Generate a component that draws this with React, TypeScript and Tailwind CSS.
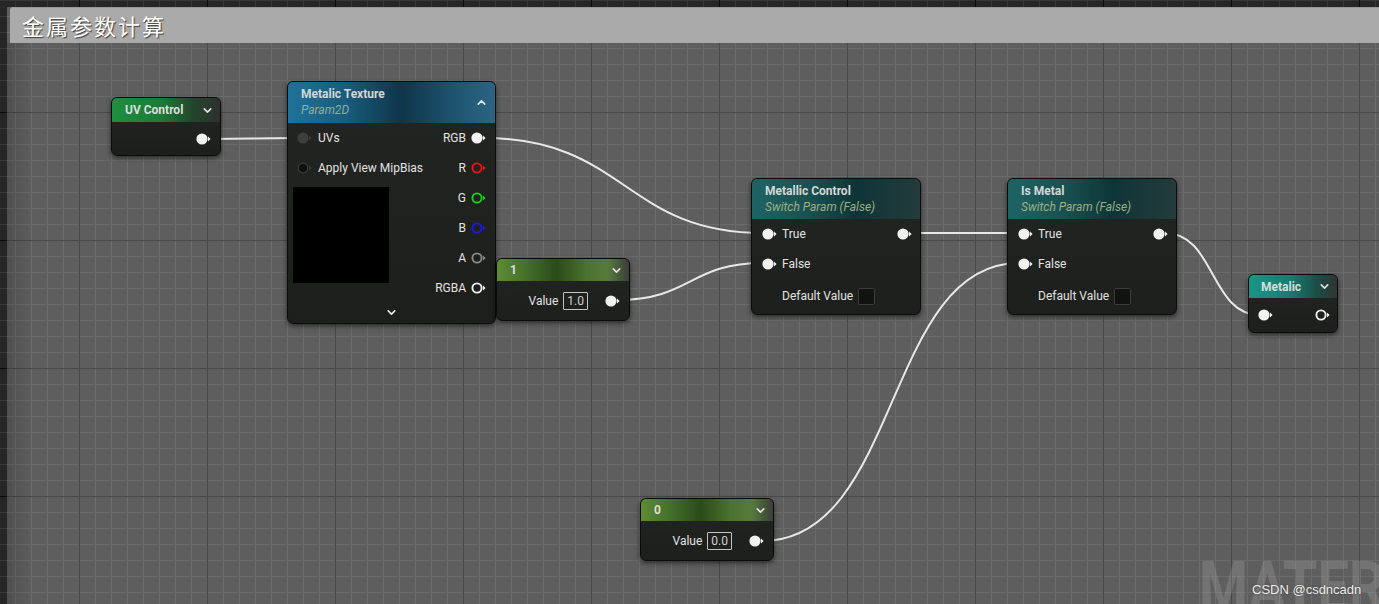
import React from 'react';
import { ChevronDown, ChevronUp } from 'lucide-react';

// --- Pin d'entrée / sortie (cercle + petite flèche) ---
type PinKind = 'filled' | 'outline' | 'dim' | 'dark';

const Pin = ({ kind = 'filled', color = '#f2f2f2' }: { kind?: PinKind; color?: string }) => {
    if (kind === 'outline') {
        return (
            <svg width="15" height="12" viewBox="0 0 15 12" className="shrink-0">
                <circle cx="6" cy="6" r="4.6" fill="none" stroke={color} strokeWidth="1.9" />
                <polygon points="12,3.6 14.6,6 12,8.4" fill={color} />
            </svg>
        );
    }
    if (kind === 'dim') {
        return (
            <svg width="15" height="12" viewBox="0 0 15 12" className="shrink-0">
                <circle cx="6" cy="6" r="5.5" fill="#3d3e3d" />
                <polygon points="12,3.6 14.6,6 12,8.4" fill="#3d3e3d" />
            </svg>
        );
    }
    if (kind === 'dark') {
        return (
            <svg width="15" height="12" viewBox="0 0 15 12" className="shrink-0">
                <circle cx="6" cy="6" r="4.8" fill="#0f0f0f" stroke="#3a3a3a" strokeWidth="1.2" />
                <polygon points="12,3.6 14.6,6 12,8.4" fill="#3a3a3a" />
            </svg>
        );
    }
    return (
        <svg width="15" height="12" viewBox="0 0 15 12" className="shrink-0">
            <circle cx="6" cy="6" r="5.6" fill={color} />
            <polygon points="12,3.6 14.6,6 12,8.4" fill={color} />
        </svg>
    );
};

const nodeBase =
    'absolute rounded-[6px] border border-[#0b0b0b] bg-[linear-gradient(180deg,#232523_0%,#1d1f1d_100%)] shadow-[0_2px_5px_rgba(0,0,0,0.55)] font-[family-name:Roboto,sans-serif] text-[12px] text-[#e2e2e2]';

// --- Noeud constante (1 / 0) ---
const ConstantNode = ({ pos, label, value }: { pos: string; label: string; value: string }) => (
    <div className={`${nodeBase} ${pos} w-[134px] h-[63px]`}>
        <div className="h-[22px] rounded-t-[5px] flex items-center justify-between pl-[13px] pr-[6px] bg-[linear-gradient(90deg,#5d8b34_0%,#44702a_22%,#2b4a19_45%,#4a7230_68%,#587a3e_84%,#3a3d38_100%)]">
            <span className="font-bold text-[#dcdcdc]">{label}</span>
            <ChevronDown size={13} strokeWidth={3} className="text-[#e0e0e0]" />
        </div>
        <div className="h-[39px] pt-[1px] flex items-center justify-end pr-[9px]">
            <span>Value</span>
            <span className="ml-[5px] h-[18px] px-[3px] border border-[#c4c4c4] rounded-[1px] text-[#cfcfcf] leading-[16px]">
                {value}
            </span>
            <span className="ml-[17px]">
                <Pin />
            </span>
        </div>
    </div>
);

// --- Noeud Switch Param ---
const SwitchNode = ({ pos, title }: { pos: string; title: string }) => (
    <div className={`${nodeBase} ${pos} w-[170px] h-[137px]`}>
        <div className="h-[40px] rounded-t-[5px] flex flex-col justify-center pl-[13px] bg-[linear-gradient(90deg,#1e6463_0%,#18504f_35%,#0e3536_62%,#233b3b_100%)]">
            <span className="font-bold text-[#d6d6d6] leading-[15px]">{title}</span>
            <span className="italic text-[#9fae86] leading-[16px]">Switch Param (False)</span>
        </div>
        <div className="h-[30px] flex items-center justify-between pl-[10px] pr-[8px]">
            <div className="flex items-center gap-[5px]">
                <Pin />
                <span>True</span>
            </div>
            <Pin />
        </div>
        <div className="h-[30px] flex items-center pl-[10px] gap-[5px]">
            <Pin />
            <span>False</span>
        </div>
        <div className="h-[34px] flex items-center pl-[30px] gap-[5px]">
            <span>Default Value</span>
            <span className="w-[17px] h-[17px] rounded-[2px] bg-[#121212] border border-[#3a3a3a]" />
        </div>
    </div>
);

const App = () => {
    return (
        <div className="relative w-[1379px] h-[604px] overflow-hidden bg-[#262626] bg-[linear-gradient(to_right,#0a0a0a_1px,transparent_1px),linear-gradient(to_bottom,#0a0a0a_1px,transparent_1px),linear-gradient(to_right,#373737_1px,transparent_1px),linear-gradient(to_bottom,#373737_1px,transparent_1px)] bg-[size:128px_128px,128px_128px,16px_16px,16px_16px] bg-[position:79px_112px,79px_112px,15px_0px,15px_0px]">
            {/* Boîte de commentaire */}
            <div className="absolute left-[7px] top-[7px] right-0 bottom-0 bg-white/[0.26] flex flex-col">
                <div className="h-[36px] ml-[3px] rounded-tl-[3px] bg-[#aaaaaa] border-t border-[#9a9a9a] flex items-center pl-[12px]">
                    <span className="text-[22px] tracking-[2px] text-white font-[family-name:'Noto_Sans_CJK_SC',sans-serif] [text-shadow:1px_1px_1px_rgba(0,0,0,0.65)]">
                        金属参数计算
                    </span>
                </div>
                <div className="flex-1 flex">
                    <div className="w-[26px] bg-[linear-gradient(90deg,rgba(0,0,0,0.16),transparent)]" />
                </div>
            </div>

            {/* Câbles */}
            <svg className="absolute inset-0 pointer-events-none" width="1379" height="604">
                <g fill="none" stroke="#e8e8e8" strokeWidth="2">
                    <path d="M209,139 C250,139 255,138 298,138" />
                    <path d="M483,138 C625,138 625,233 763,233" />
                    <path d="M618,300 C690,300 690,263 763,263" />
                    <path d="M910,233 L1019,233" />
                    <path d="M762,541 C900,541 885,263 1019,263" />
                    <path d="M1165,233 C1215,233 1210,315 1260,315" />
                </g>
            </svg>

            {/* UV Control */}
            <div className={`${nodeBase} left-[111px] top-[97px] w-[110px] h-[59px]`}>
                <div className="h-[24px] rounded-t-[5px] flex items-center justify-between pl-[13px] pr-[6px] bg-[linear-gradient(90deg,#1e8e3e_0%,#1b7c37_45%,#24452c_75%,#2e312e_100%)]">
                    <span className="font-bold text-[#dcdcdc]">UV Control</span>
                    <ChevronDown size={13} strokeWidth={3} className="text-[#e0e0e0]" />
                </div>
                <div className="h-[33px] pt-[1px] flex items-center justify-end pr-[9px]">
                    <Pin />
                </div>
            </div>

            {/* Metalic Texture */}
            <div className={`${nodeBase} left-[287px] top-[81px] w-[209px] h-[243px]`}>
                <div className="h-[41px] rounded-t-[5px] flex items-center justify-between pl-[13px] pr-[7px] bg-[linear-gradient(90deg,#1f7299_0%,#185c7d_28%,#0f3549_55%,#1e5470_80%,#2b6583_100%)]">
                    <div className="flex flex-col">
                        <span className="font-bold text-[#d6d6d6] leading-[15px]">Metalic Texture</span>
                        <span className="italic text-[#8fae9f] leading-[17px]">Param2D</span>
                    </div>
                    <ChevronUp size={13} strokeWidth={3} className="text-[#e6e6e6]" />
                </div>
                <div className="flex justify-between">
                    <div className="flex flex-col pl-[9px]">
                        <div className="h-[30px] flex items-center gap-[6px]">
                            <Pin kind="dim" />
                            <span>UVs</span>
                        </div>
                        <div className="h-[30px] flex items-center gap-[6px]">
                            <Pin kind="dark" />
                            <span>Apply View MipBias</span>
                        </div>
                        <div className="mt-[4px] -ml-[4px] w-[96px] h-[96px] bg-black" />
                    </div>
                    <div className="flex flex-col items-end pr-[9px]">
                        {[
                            { l: 'RGB', k: 'filled' as PinKind, c: '#f4f4f4' },
                            { l: 'R', k: 'outline' as PinKind, c: '#e81515' },
                            { l: 'G', k: 'outline' as PinKind, c: '#17d617' },
                            { l: 'B', k: 'outline' as PinKind, c: '#1a1ae0' },
                            { l: 'A', k: 'outline' as PinKind, c: '#8a8a8a' },
                            { l: 'RGBA', k: 'outline' as PinKind, c: '#f0f0f0' },
                        ].map((p) => (
                            <div key={p.l} className="h-[30px] flex items-center gap-[5px]">
                                <span>{p.l}</span>
                                <Pin kind={p.k} color={p.c} />
                            </div>
                        ))}
                    </div>
                </div>
                <div className="h-[19px] flex items-center justify-center">
                    <ChevronDown size={13} strokeWidth={3} className="text-[#e6e6e6]" />
                </div>
            </div>

            <ConstantNode pos="left-[496px] top-[258px]" label="1" value="1.0" />
            <ConstantNode pos="left-[640px] top-[498px]" label="0" value="0.0" />

            <SwitchNode pos="left-[751px] top-[178px]" title="Metallic Control" />
            <SwitchNode pos="left-[1007px] top-[178px]" title="Is Metal" />

            {/* Metalic (sortie) */}
            <div className={`${nodeBase} left-[1248px] top-[274px] w-[90px] h-[59px]`}>
                <div className="h-[23px] rounded-t-[5px] flex items-center justify-between pl-[12px] pr-[6px] bg-[linear-gradient(90deg,#1a9585_0%,#157f72_45%,#1b4c46_78%,#2f3534_100%)]">
                    <span className="font-bold text-[#dcdcdc]">Metalic</span>
                    <ChevronDown size={13} strokeWidth={3} className="text-[#e0e0e0]" />
                </div>
                <div className="h-[34px] flex items-center justify-between pl-[9px] pr-[7px]">
                    <Pin />
                    <Pin kind="outline" color="#f0f0f0" />
                </div>
            </div>

            {/* Filigranes */}
            <div className="absolute left-[1199px] top-[552px] origin-left scale-x-[0.8] whitespace-nowrap text-[70px] font-bold leading-none text-white/[0.13] font-[family-name:Roboto,sans-serif]">
                MATERIAL
            </div>
            <div className="absolute left-[1252px] top-[580px] text-[13px] text-[#eeeeee] font-[family-name:'Liberation_Sans',sans-serif] [text-shadow:0_0_2px_rgba(0,0,0,0.5)]">
                CSDN @csdncadn
            </div>
        </div>
    );
};

export default App;
